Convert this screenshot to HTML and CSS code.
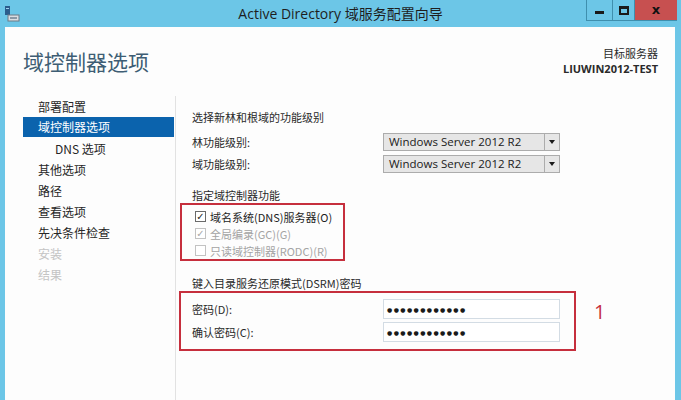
FILE: index.html
```html
<!DOCTYPE html>
<html lang="zh-CN">
<head>
    <meta charset="UTF-8">
    <meta name="viewport" content="width=device-width, initial-scale=1.0">
    <title>Active Directory 域服务配置向导</title>
    <link rel="stylesheet" href="styles.css">
</head>
<body>
    <div class="window">
        <div class="titlebar">
            <svg class="app-icon" width="16" height="18" viewBox="0 0 16 18">
                <rect x="1" y="1" width="5" height="9" fill="#2b5d8c"/>
                <rect x="2" y="3" width="3" height="1" fill="#9fd0ee"/>
                <rect x="4" y="10" width="11" height="6" fill="#d9dde2" stroke="#6d7a86" stroke-width="1"/>
                <rect x="6" y="12" width="7" height="2" fill="#8a98a6"/>
            </svg>
            <div class="title">Active Directory 域服务配置向导</div>
            <div class="win-buttons">
                <div class="win-btn minimize"><span></span></div>
                <div class="win-btn maximize"><span></span></div>
                <div class="win-btn close">x</div>
            </div>
        </div>

        <div class="client">
            <div class="header">
                <h1>域控制器选项</h1>
                <div class="target">
                    <div>目标服务器</div>
                    <div class="server-name">LIUWIN2012-TEST</div>
                </div>
            </div>

            <div class="main">
                <ul class="nav">
                    <li>部署配置</li>
                    <li class="active">域控制器选项</li>
                    <li class="sub">DNS 选项</li>
                    <li>其他选项</li>
                    <li>路径</li>
                    <li>查看选项</li>
                    <li>先决条件检查</li>
                    <li class="disabled">安装</li>
                    <li class="disabled">结果</li>
                </ul>

                <div class="content">
                    <div class="section-title first">选择新林和根域的功能级别</div>
                    <div class="field-grid">
                        <label>林功能级别:</label>
                        <div class="combo"><span>Windows Server 2012 R2</span><i></i></div>
                        <label>域功能级别:</label>
                        <div class="combo"><span>Windows Server 2012 R2</span><i></i></div>
                    </div>

                    <div class="section-title">指定域控制器功能</div>
                    <div class="mark checks">
                        <div class="check-row">
                            <span class="box checked">&#10003;</span>域名系统(DNS)服务器(O)
                        </div>
                        <div class="check-row disabled">
                            <span class="box checked">&#10003;</span>全局编录(GC)(G)
                        </div>
                        <div class="check-row disabled">
                            <span class="box"></span>只读域控制器(RODC)(R)
                        </div>
                    </div>

                    <div class="section-title">键入目录服务还原模式(DSRM)密码</div>
                    <div class="dsrm">
                        <div class="mark passwords">
                            <div class="field-grid pw-grid">
                                <label>密码(D):</label>
                                <div class="pw-input"><span>●●●●●●●●●●●●</span></div>
                                <label>确认密码(C):</label>
                                <div class="pw-input"><span>●●●●●●●●●●●●</span></div>
                            </div>
                        </div>
                        <div class="note">1</div>
                    </div>
                </div>
            </div>
        </div>
    </div>
</body>
</html>
```

FILE: styles.css
```css
body {
    margin: 0;
    font-family: "Noto Sans CJK SC", "Noto Sans", sans-serif;
    background: #6cc6e7;
}
.window {
    width: 681px;
    height: 400px;
    display: flex;
    flex-direction: column;
    background: #6cc6e7;
    overflow: hidden;
}
.titlebar {
    height: 27px;
    flex-shrink: 0;
    display: grid;
    grid-template-columns: 1fr auto 1fr;
    align-items: start;
}
.app-icon {
    margin: 5px 0 0 4px;
}
.title {
    font-family: "Open Sans", "Noto Sans CJK SC", sans-serif;
    font-size: 14px;
    line-height: 27px;
    color: #1e1e1e;
}
.win-buttons {
    justify-self: end;
    display: flex;
    margin-right: 4px;
    height: 20px;
    border-bottom: 1px solid #3f8fae;
}
.win-btn {
    height: 20px;
    display: flex;
    align-items: center;
    justify-content: center;
    border-left: 1px solid #3f8fae;
}
.minimize {
    width: 25px;
}
.minimize span {
    width: 9px;
    height: 3px;
    margin-top: 5px;
    background: #1a1a1a;
}
.maximize {
    width: 21px;
}
.maximize span {
    width: 6px;
    height: 4px;
    border: 2px solid #1a1a1a;
    border-top-width: 3px;
}
.close {
    width: 42px;
    background: #c75050;
    color: #111;
    font-family: "DejaVu Sans", sans-serif;
    font-weight: bold;
    font-size: 13px;
    line-height: 20px;
}
.client {
    flex: 1;
    margin: 0 6px 0 5px;
    background: #fdfdfd;
    display: flex;
    flex-direction: column;
    color: #2a2a2a;
}
.header {
    height: 69px;
    display: flex;
    justify-content: space-between;
    padding: 0 17px 0 18px;
}
h1 {
    margin: 20px 0 0;
    font-size: 21px;
    font-weight: normal;
    line-height: 28px;
    color: #3e5d74;
}
.target {
    margin-top: 18px;
    text-align: right;
    font-size: 11px;
    line-height: 16px;
}
.server-name {
    font-family: "Open Sans", sans-serif;
    font-weight: bold;
    font-size: 11px;
}
.main {
    flex: 1;
    display: flex;
}
.nav {
    list-style: none;
    margin: 0;
    padding: 0 1px 0 18px;
    width: 151px;
    font-size: 12px;
}
.nav li {
    height: 21px;
    line-height: 21px;
    padding-left: 15px;
    color: #262626;
}
.nav li.active {
    background: #0b63ad;
    color: #fff;
    height: 20px;
    line-height: 20px;
    margin: 0 0 1px;
}
.nav li.sub {
    padding-left: 32px;
}
.nav li.disabled {
    color: #c4c4c4;
}
.content {
    flex: 1;
    border-left: 1px solid #e2e2e2;
    padding: 0 0 0 16px;
    font-size: 11px;
}
.section-title {
    line-height: 16px;
    margin-top: 14px;
}
.section-title.first {
    margin-top: 13px;
}
.field-grid {
    display: grid;
    grid-template-columns: 191px 177px;
    grid-auto-rows: 18px;
    row-gap: 4px;
    align-items: center;
    margin-top: 8px;
}
.combo {
    height: 18px;
    box-sizing: border-box;
    border: 1px solid #acacac;
    background: #e6e6e6;
    display: flex;
    font-family: "Open Sans", sans-serif;
    font-size: 11.5px;
    line-height: 16px;
    color: #202020;
}
.combo span {
    flex: 1;
    padding-left: 5px;
}
.combo i {
    width: 14px;
    border-left: 1px solid #acacac;
    position: relative;
}
.combo i::after {
    content: "";
    position: absolute;
    left: 4px;
    top: 6px;
    border: 3px solid transparent;
    border-top: 4px solid #1a1a1a;
}
.mark {
    border: 2px solid #c62f3d;
    box-sizing: border-box;
}
.checks {
    width: 165px;
    margin-left: -12px;
    padding: 3px 0 0 13px;
}
.check-row {
    height: 17px;
    display: flex;
    align-items: center;
    font-size: 11px;
    white-space: nowrap;
    color: #1e1e1e;
}
.check-row.disabled {
    color: #a4a4a4;
}
.box {
    width: 11px;
    height: 11px;
    box-sizing: border-box;
    border: 1px solid #6a6a6a;
    background: #fff;
    margin-right: 4px;
    font-family: "DejaVu Sans", sans-serif;
    font-size: 10px;
    line-height: 9px;
    text-align: center;
    font-weight: bold;
}
.check-row.disabled .box {
    border-color: #c2c2c2;
    color: #a8a8a8;
}
.dsrm {
    display: flex;
    align-items: flex-start;
}
.passwords {
    width: 397px;
    margin-left: -13px;
    padding: 6px 0 7px 11px;
}
.pw-grid {
    margin-top: 0;
    grid-auto-rows: 20px;
    row-gap: 3px;
}
.pw-input {
    height: 20px;
    box-sizing: border-box;
    border: 1px solid #d3dce4;
    background: #fff;
    display: flex;
    align-items: center;
    padding-left: 3px;
}
.pw-input span {
    font-family: "DejaVu Sans", sans-serif;
    font-size: 6px;
    letter-spacing: 1.4px;
    color: #1a1a1a;
}
.note {
    margin: 11px 0 0 18px;
    font-family: "Open Sans", sans-serif;
    font-size: 20px;
    line-height: 20px;
    color: #c62f3d;
}
```
